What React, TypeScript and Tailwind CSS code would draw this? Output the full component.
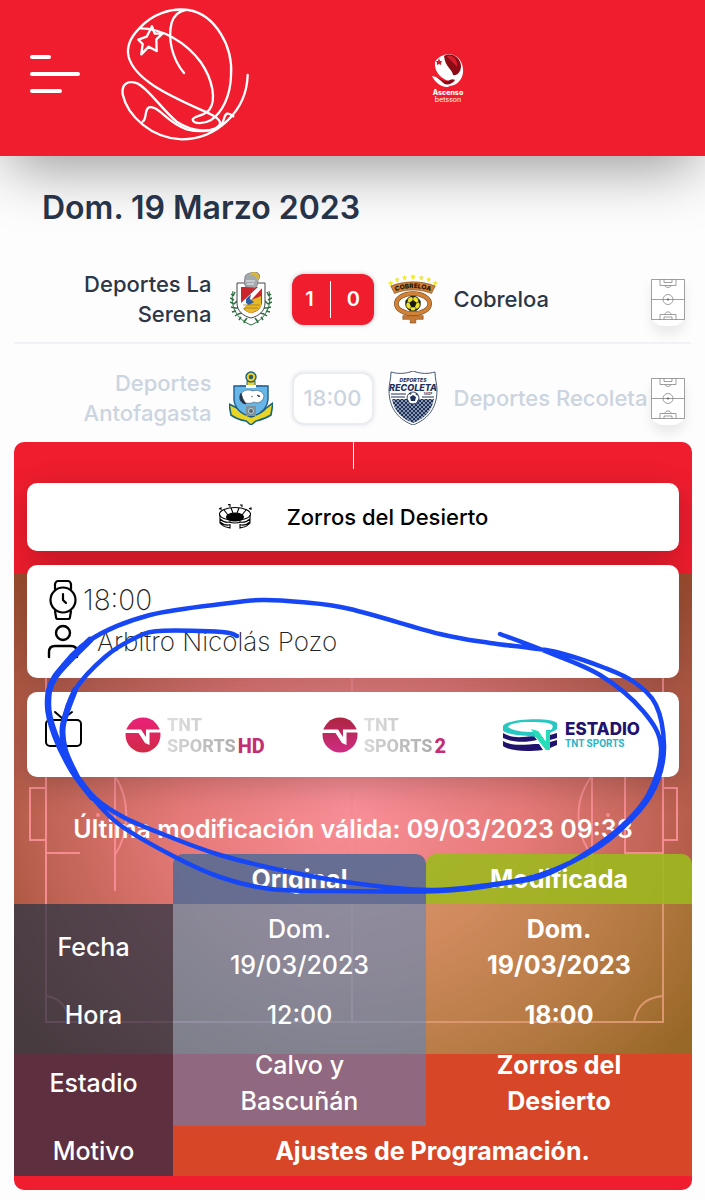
import type { ReactNode } from "react";

type Match = {
  home: string;
  away: string;
  homeCrest: ReactNode;
  awayCrest: ReactNode;
  score?: [number, number];
  time?: string;
};

const FederationLogo = () => (
  <svg
    viewBox="360 18 393 402"
    className="h-[134px] w-[131px]"
    fill="none"
    stroke="#fff"
    strokeWidth="7"
    strokeLinecap="round"
    strokeLinejoin="round"
  >
    <path d="M418 82C455 40 510 20 565 27C645 40 700 135 693 225C691 285 667 335 632 358C612 369 580 370 578 356C582 344 612 346 628 326C650 298 638 235 602 183C560 125 485 80 418 82C395 105 378 135 386 168C405 235 500 280 600 325C645 344 668 358 658 373C640 395 580 395 530 362C485 325 445 262 412 247C382 236 364 250 368 280C382 345 455 412 545 415C650 415 740 330 743 222" />
    <path d="M552 216C518 175 502 115 515 65C521 46 535 31 556 27" />
    <path d="M428 362C442 352 432 326 447 319C475 312 500 365 560 385C600 395 640 392 662 372C673 366 670 343 681 338C690 336 695 344 700 346" />
    <path d="M456 76L464 98L488 97L469 115L470 150L446 137L424 160L428 129L415 116L440 107Z" />
  </svg>
);

const AscensoLogo = () => (
  <svg viewBox="0 0 32 34" className="h-[34px] w-8">
    <path d="M3 9C8 0 22-2 28 7C34 17 31 28 22 32C14 35 6 31 5 26C9 30 14 31 20 29C13 27 2 22 3 9Z" fill="#fff" />
    <path d="M12 3C21-2 29 6 29 13C29 19 25 23 21 22C21 17 13 14 12 3Z" fill="#8b0c16" />
    <path d="M15 3C22 1 26 8 25 14C22 9 18 8 15 3Z" fill="#d91b2b" />
    <path d="M2 25C6 23 9 28 14 28C18 28 20 25 23 27C20 32 13 33 9 29L5 29Z" fill="#8b0c16" />
    <path d="M0 23C3 30 10 35 18 34C12 32 8 26 4 24Z" fill="#fff" />
    <path d="M7 5L8 8L10 8L9 10L9 12L7 11L5 12L5 10L4 8L6 8Z" fill="#d81828" />
  </svg>
);

const LaSerenaCrest = () => (
  <svg viewBox="0 0 42 54" className="h-[54px] w-[42px]">
    <g fill="none" stroke="#2c6e3f" strokeWidth="1">
      <path d="M3 19C0 34 6 47 21 53C36 47 42 34 39 19" />
      <path
        d="M1 22L4 24M0 26L4 28M0 30L4 32M1 35L5 36M2 40L6 39M5 44L8 42M9 48L11 45M14 51L15 48M5 20L3 24M7 29L4 32M9 36L5 36M12 41L8 42M17 46L14 50M41 22L38 24M42 26L38 28M42 30L38 32M41 35L37 36M40 40L36 39M37 44L34 42M33 48L31 45M28 51L27 48M37 20L39 24M35 29L38 32M33 36L37 36M30 41L34 42M25 46L28 50"
        strokeWidth="1.5"
      />
    </g>
    <path d="M7 11H35V31C35 39 29 44 21 46C13 44 7 39 7 31Z" fill="#fff" stroke="#333" strokeWidth="0.9" />
    <path d="M11 15H32V29C32 37 27 40 21 41C15 40 11 36 11 29Z" fill="#c9252b" />
    <path d="M12 32L31 24V34C29 38 25 40 21 41C16 40 13 37 12 32Z" fill="#e7b928" />
    <path d="M10 32L29 14H34L12 38Z" fill="#fff" />
    <path d="M16 27L21 22L20 27L24 30L19 33L16 31Z" fill="#2c5ea9" />
    <path d="M14 36H28M13 33H30" stroke="#9a6d1c" strokeWidth="0.7" />
    <path d="M15 6C14 2 20 1 24 0C30 0 31 5 28 8C28 11 28 14 25 16L16 15C14 12 14 9 15 6Z" fill="#a3a9ac" stroke="#646b70" strokeWidth="0.7" />
    <path d="M19 2C23-1 30 0 29 6L27 10C28 5 24 3 19 2Z" fill="#d9b634" />
    <path d="M16 9H25M17 12H24" stroke="#eee" />
  </svg>
);

const CobreloaCrest = () => (
  <svg viewBox="0 0 54 54" className="h-[54px] w-[54px]">
    {[
      [3, 10], [10, 6], [18, 4], [27, 3], [36, 4], [44, 6], [51, 10],
    ].map(([x, y]) => (
      <path
        key={x}
        transform={`translate(${x} ${y})`}
        d="M0-3L1-1L3-1L1 1L2 3L0 2L-2 3L-1 1L-3-1L-1-1Z"
        fill="#f2ea22"
      />
    ))}
    <path d="M24 39H30V45H38V49H30V53H24V49H16V45H24Z" fill="#c77a35" stroke="#704217" strokeWidth="0.6" />
    <ellipse cx="27" cy="32" rx="18" ry="11" fill="#fff" stroke="#704217" strokeWidth="5" />
    <ellipse cx="27" cy="32" rx="18" ry="11" fill="none" stroke="#d28236" strokeWidth="3.8" />
    <path d="M3 13C18 7 36 7 51 13L47 21C34 16 20 16 7 21Z" fill="#d28236" stroke="#704217" strokeWidth="0.6" />
    <path id="cobreloaArc" d="M7 19C20 14 34 14 47 19" fill="none" />
    <text fontSize="7" fontWeight="800" fill="#211508">
      <textPath href="#cobreloaArc" startOffset="50%" textAnchor="middle">COBRELOA</textPath>
    </text>
    <circle cx="27" cy="32" r="8" fill="#ece32a" stroke="#1a1a12" />
    <path d="M27 28L31 31L29 36H25L23 31ZM24 24H30L27 26ZM19 29L22 27L20 33ZM35 29L32 27L34 33ZM21 37L25 38L24 40ZM33 37L29 38L30 40Z" fill="#1a1a12" />
    <path d="M27 26V28M31 31L34 30M29 36L31 38M25 36L23 38M23 31L20 30" stroke="#1a1a12" strokeWidth="0.7" />
  </svg>
);

const AntofagastaCrest = () => (
  <svg viewBox="0 0 44 54" className="h-[54px] w-11">
    <path d="M18 10H26V15H33V19H11V15H18Z" fill="#f1cc2b" stroke="#17657b" />
    <circle cx="22" cy="6" r="5" fill="#f1cc2b" stroke="#17657b" strokeWidth="1.4" />
    <circle cx="22" cy="6" r="2.2" fill="#2a5f63" />
    <path d="M0 33L8 37C12 42 17 44 22 44C28 44 34 41 37 37L44 32L42 44C36 48 31 49 27 50L22 54L17 50C11 49 6 47 2 44Z" fill="#e8d527" stroke="#17657b" strokeWidth="1.6" />
    <path d="M5 15H39V29C38 38 32 43 22 46C12 43 6 38 5 29Z" fill="#68b5e8" stroke="#1d5b8c" strokeWidth="1.4" />
    <path d="M17 14H27V17H17Z" fill="#fff" />
    <path d="M11 25C13 19 19 18 24 20C29 18 34 21 35 25C34 31 29 33 25 31C22 33 14 33 11 29Z" fill="#fff" stroke="#33536b" strokeWidth="0.6" />
    <path d="M12 22C9 27 12 33 17 33L14 28ZM28 24L31 25L30 26ZM22 26L24 25" fill="#24354a" stroke="#24354a" strokeWidth="0.6" />
    <rect x="17" y="35" width="10" height="10" fill="#7e929b" />
    <circle cx="22" cy="40" r="2.5" fill="#536872" stroke="#dce5e8" strokeWidth="0.8" />
  </svg>
);

const RecoletaCrest = () => (
  <svg viewBox="0 0 50 54" className="h-[54px] w-[50px]">
    <defs>
      <pattern id="weave" width="4" height="4" patternUnits="userSpaceOnUse">
        <rect width="4" height="4" fill="#1e315b" />
        <path d="M0 0L2 2L4 0M0 4L2 2L4 4" stroke="#b5c1d3" strokeWidth="0.7" fill="none" />
      </pattern>
    </defs>
    <path d="M3 1C10 3 17 3 25 0C33 3 40 3 47 1C47 8 49 13 49 19C49 39 38 49 25 54C12 49 1 39 1 19C1 13 3 8 3 1Z" fill="#fff" stroke="#344767" strokeWidth="0.9" />
    <path d="M4 28H46C44 40 36 48 25 52C14 48 6 40 4 28Z" fill="url(#weave)" />
    <text x="25" y="11" textAnchor="middle" fontSize="5" fontStyle="italic" fontWeight="800" fill="#1e315b">DEPORTES</text>
    <text x="25" y="20" textAnchor="middle" fontSize="9" fontStyle="italic" fontWeight="800" fill="#1e315b">RECOLETA</text>
    <path d="M3 23H18M3 26H17M34 26H46" stroke="#1e315b" strokeWidth="1.2" />
    <text x="40" y="24" textAnchor="middle" fontSize="3" fontWeight="700" fill="#1e315b">SADP</text>
    <circle cx="25" cy="27" r="6" fill="#fff" stroke="#1e315b" strokeWidth="0.9" />
    <path d="M25 24L28 26L27 30H23L22 26ZM21 22L24 22L22 24ZM29 22L30 25L27 23ZM19 28L21 30L20 31ZM31 28L29 30L30 31Z" fill="#1e315b" />
  </svg>
);

const PitchIcon = () => (
  <svg viewBox="0 0 34 41" className="h-[41px] w-[34px]" fill="none" stroke="#777" strokeWidth="0.7">
    <path d="M0.5 0.5H33.5V40.5H0.5ZM0.5 20.5H33.5" />
    <circle cx="17" cy="20.5" r="5" />
    <circle cx="17" cy="20.5" r="0.8" fill="#333" />
    <path d="M9 0.5V6.5H25V0.5M13 0.5V3.5H21V0.5M14 6.5C14 9 20 9 20 6.5M9 40.5V35.5H25V40.5M13 40.5V38H21V40.5M14 35.5C14 32 20 32 20 35.5" />
  </svg>
);

const StadiumIcon = () => (
  <svg viewBox="0 0 34 26" className="h-[26px] w-[34px]" fill="none" stroke="#000" strokeWidth="1.1">
    <ellipse cx="17" cy="10" rx="15.5" ry="6.5" />
    <ellipse cx="17" cy="13" rx="8.5" ry="4" fill="#000" />
    <path d="M6 6L10 11M13 4L15 9M21 4L19 9M28 6L24 11M2 11V19C5 23 8 23 12 24V20M32 11V19C29 23 26 23 22 24V20M2 15C7 20 11 18 13 18M32 15C27 20 23 18 21 18M2 18C6 22 9 21 12 21M32 18C28 22 25 21 22 21M11 18Q17 20 23 18" />
    <path d="M1 5L3 4V6M10 1L12 0V3M22 1L24 1V3M31 5L33 4V6" />
  </svg>
);

const WatchIcon = () => (
  <svg viewBox="0 0 28 42" className="h-[42px] w-7" fill="none" stroke="#000" strokeWidth="2.2" strokeLinecap="round">
    <circle cx="14" cy="21" r="12.5" />
    <path d="M6 10L6 5Q7 2 9 2H19Q21 2 22 5L22 10M6 32L7 38Q7 40 9 40H19Q21 40 21 38L22 32M14 15V21L17 24" />
  </svg>
);

const RefereeIcon = () => (
  <svg viewBox="0 0 32 36" className="h-9 w-8" fill="none" stroke="#000" strokeWidth="2.4" strokeLinecap="round">
    <circle cx="16" cy="9" r="7" />
    <path d="M2 33V28Q2 22 8 22H24Q30 22 30 28V33" />
  </svg>
);

const TvIcon = () => (
  <svg viewBox="0 0 38 38" className="h-[38px] w-[38px] shrink-0" fill="none" stroke="#000" strokeWidth="2" strokeLinecap="round">
    <rect x="1" y="10" width="35" height="26" rx="4" />
    <path d="M10 2L18 9L27 2" />
  </svg>
);

const TntSports = ({ suffix, badge }: { suffix: string; badge: ReactNode }) => (
  <div className="flex items-center gap-1.5">
    {badge}
    <div className="font-['Roboto'] text-[18px] leading-[22px] font-extrabold">
      <div className="bg-linear-to-r from-[#dedede] to-[#b8b8b8] bg-clip-text text-transparent">TNT</div>
      <div className="flex gap-0.5 leading-5">
        <span className="bg-linear-to-r from-[#d8d8d8] to-[#adadad] bg-clip-text text-transparent">SPORTS</span>
        <span className="text-[20px] text-[#c42e72]">{suffix}</span>
      </div>
    </div>
  </div>
);

const TntBadge = ({ id, from, to }: { id: string; from: string; to: string }) => (
  <svg viewBox="0 0 36 36" className="h-9 w-9">
    <defs>
      <linearGradient id={id} x1="0" y1="0" x2="0" y2="1">
        <stop offset="0" stopColor={from} />
        <stop offset="1" stopColor={to} />
      </linearGradient>
    </defs>
    <circle cx="18" cy="18" r="17.5" fill={`url(#${id})`} />
    <path d="M0 12.5H16L21 20V12.5H36V15.5H24.5V28L20 26L13.5 16H0Z" fill="#fff" />
  </svg>
);

const EstadioLogo = () => (
  <div className="flex items-center gap-2">
    <svg viewBox="0 0 54 32" className="h-8 w-[54px]" fill="none">
      <path d="M0 14C9 20 20 18 31 17L34 21C22 24 8 23 0 19ZM0 22C10 28 23 25 36 25L40 31C22 33 7 32 0 27ZM47 16L54 14V19L47 21ZM47 23L54 21V26L47 29Z" fill="#21126e" />
      <path d="M0 7C4-1 50-2 54 4V10C50 13 48 13 47 14V31H43L33 18C24 16 8 17 0 12ZM5 8C12 13 24 13 35 13L43 23V11H48C54 4 44 3 27 3C14 3 6 5 5 8Z" fill="#27c8c2" fillRule="evenodd" />
      <path d="M28 10C33 12 35 11 36 13L43 23V12L47 12V31H43L33 18Z" fill="#26ddb8" />
    </svg>
    <div className="font-['Inter']">
      <div className="text-[17px] leading-[17px] font-extrabold text-[#21126e]">ESTADIO</div>
      <div className="font-['Roboto'] text-[10px] leading-[11px] font-bold text-[#29b5c5]">TNT SPORTS</div>
    </div>
  </div>
);

/* Pitch photo that sits behind the match detail */
const PitchBackground = () => (
  <div className="absolute inset-x-0 top-[132px] h-[480px] bg-[radial-gradient(ellipse_62%_80%_at_50%_48%,#f98f98_0%,#e67a79_40%,#bf6354_74%,#984b2d_100%)]">
    <svg viewBox="0 0 678 480" preserveAspectRatio="none" className="h-full w-full" fill="none" stroke="#f58c91" strokeWidth="2">
      <path d="M32 32H649V448H32ZM338 32V448M32 279H66M101 180V317M32 214H16V266H32M578 180V317M611 180V279H649M649 214H663V266H649" />
      <path d="M101 202C116 225 116 258 101 281M578 202C560 225 560 258 578 281" />
      <path d="M32 422Q48 424 54 440M649 422Q624 424 620 448" />
      <circle cx="338" cy="240" r="45" strokeOpacity="0.5" />
      <circle cx="84" cy="241" r="1" />
      <circle cx="594" cy="241" r="1" />
    </svg>
  </div>
);

const SCRIBBLE_POINTS = [
  [237, 636], [222, 632], [160, 631], [135, 638], [105, 657], [75, 690],
  [63, 725], [65, 750], [76, 775], [96, 799], [125, 818], [165, 835],
  [220, 855], [290, 872], [360, 884], [430, 890], [480, 886], [540, 875],
  [600, 846], [640, 810], [658, 780], [664, 745], [656, 705], [634, 682],
  [605, 668], [560, 653], [530, 648], [490, 643], [440, 634], [350, 609],
  [300, 602], [262, 600], [230, 603], [150, 615], [90, 640], [55, 677],
  [48, 705], [55, 735], [72, 770], [92, 797], [120, 825], [175, 857],
  [220, 877], [270, 889], [330, 891], [440, 891], [500, 884], [550, 873],
  [610, 836], [648, 795], [661, 747], [643, 711], [600, 675], [545, 651],
  [500, 634],
];

const toSmoothPath = (points: number[][]) =>
  points.slice(1).reduce((path, [x, y], i) => {
    const [px, py] = points[Math.max(i - 1, 0)];
    const [ax, ay] = points[i];
    const [nx, ny] = points[Math.min(i + 2, points.length - 1)];
    const c1 = `${ax + (x - px) / 6} ${ay + (y - py) / 6}`;
    const c2 = `${x - (nx - ax) / 6} ${y - (ny - ay) / 6}`;
    return `${path}C${c1} ${c2} ${x} ${y}`;
  }, `M${points[0][0]} ${points[0][1]}`);

const Scribble = () => (
  <svg
    viewBox="0 0 705 1200"
    className="pointer-events-none absolute inset-x-0 top-0 w-full"
    fill="none"
    stroke="#1747f5"
    strokeWidth="4.5"
    strokeLinecap="round"
    strokeLinejoin="round"
  >
    <path d={toSmoothPath(SCRIBBLE_POINTS)} />
    <path d={toSmoothPath(SCRIBBLE_POINTS.slice(34, 40))} strokeWidth="6.5" />
    <path d={toSmoothPath(SCRIBBLE_POINTS.slice(5, 9))} strokeWidth="6" />
  </svg>
);

const MATCHES: Match[] = [
  {
    home: "Deportes La Serena",
    away: "Cobreloa",
    homeCrest: <LaSerenaCrest />,
    awayCrest: <CobreloaCrest />,
    score: [1, 0],
  },
  {
    home: "Deportes Antofagasta",
    away: "Deportes Recoleta",
    homeCrest: <AntofagastaCrest />,
    awayCrest: <RecoletaCrest />,
    time: "18:00",
  },
];

const CHANGES = [
  { label: "Fecha", original: "Dom. 19/03/2023", modified: "Dom. 19/03/2023" },
  { label: "Hora", original: "12:00", modified: "18:00" },
  { label: "Estadio", original: "Calvo y Bascuñán", modified: "Zorros del Desierto" },
];

const MatchRow = ({ match }: { match: Match }) => (
  <div
    className={`mx-3.5 flex h-22 items-center pr-1.5 text-[22px] leading-[30px] font-medium ${
      match.score ? "border-b-2 border-[#f1f2f5] text-[#2c3647]" : "text-[#cbd4df]"
    }`}
  >
    <div className="grid flex-1 grid-cols-[1fr_auto_1fr] items-center gap-4">
      <p className="max-w-[150px] justify-self-end text-right">{match.home}</p>
      <div className="grid grid-cols-[50px_82px_50px] items-center gap-3.5">
        <div className="flex justify-center pr-1">{match.homeCrest}</div>
        {match.score ? (
          <div className="flex h-[51px] items-center justify-center gap-4 rounded-xl bg-[#ef1d2e] text-[20px] font-semibold text-white shadow-[0_0_4px_rgba(0,0,0,0.25)]">
            <span>{match.score[0]}</span>
            <span className="h-[37px] w-px bg-white" />
            <span>{match.score[1]}</span>
          </div>
        ) : (
          <div className="flex h-[53px] items-center justify-center rounded-xl border-2 border-[#e9ecf1] bg-white shadow-[0_0_4px_rgba(0,0,0,0.1)]">
            {match.time}
          </div>
        )}
        <div className="flex justify-center">{match.awayCrest}</div>
      </div>
      <p className="w-0 whitespace-nowrap">{match.away}</p>
    </div>
    <button
      type="button"
      aria-label="Ver formación"
      className="shrink-0 rounded-xl bg-white pt-1.5 pb-1.5 shadow-[0_8px_12px_rgba(0,0,0,0.08)]"
    >
      <PitchIcon />
    </button>
  </div>
);

const MatchDetail = () => (
  <section className="relative mr-[13px] ml-3.5 overflow-hidden rounded-[10px] bg-[#ef1d2e] pb-3.5">
    <PitchBackground />
    <div className="relative">
      <div className="mx-auto h-[27px] w-px bg-white" />
      <div className="flex flex-col gap-3.5 px-[13px] pt-3.5">
        <div className="flex h-[68px] items-center justify-center gap-[35px] rounded-[10px] bg-white text-[22px] font-medium text-black shadow-[0_8px_32px_rgba(0,0,0,0.2)]">
          <StadiumIcon />
          <p>Zorros del Desierto</p>
        </div>
        <div className="h-[113px] rounded-[10px] bg-white px-5 pt-3.5 font-extralight text-[#222] shadow-[0_8px_32px_rgba(0,0,0,0.2)]">
          <div className="flex items-center gap-1.5 pl-0.5 text-[28px] leading-[42px]">
            <WatchIcon />
            <p>18:00</p>
          </div>
          <div className="flex items-center gap-[18px] text-[26px] leading-[42px]">
            <RefereeIcon />
            <p>Arbitro Nicolás Pozo</p>
          </div>
        </div>
        <div className="flex h-[85px] items-center gap-[42px] rounded-[10px] bg-white pr-[39px] pl-[18px] shadow-[0_8px_32px_rgba(0,0,0,0.2)]">
          <div className="pb-3">
            <TvIcon />
          </div>
          <div className="flex flex-1 items-center justify-between">
            <TntSports suffix="HD" badge={<TntBadge id="tntHd" from="#ea2079" to="#cf2b45" />} />
            <TntSports suffix="2" badge={<TntBadge id="tnt2" from="#ad2540" to="#cf2d83" />} />
            <EstadioLogo />
          </div>
        </div>
      </div>
      <p className="mt-[34px] mb-[7px] text-center text-[25px] leading-9 font-semibold whitespace-nowrap text-white">
        Última modificación válida: 09/03/2023 09:38
      </p>
      <table className="w-full table-fixed border-collapse text-center text-[25px] leading-9 font-medium text-white">
        <colgroup>
          <col className="w-[159px]" />
          <col className="w-[253px]" />
          <col />
        </colgroup>
        <thead>
          <tr>
            <td />
            <th className="rounded-t-[10px] bg-[#586c94]/90 py-[7px] font-bold">Original</th>
            <th className="rounded-t-[10px] bg-[#9cb91e]/90 py-[7px] font-bold">Modificada</th>
          </tr>
        </thead>
        <tbody>
          {CHANGES.map((row) => (
            <tr key={row.label}>
              <th className="bg-[#2c3646]/75 py-[7px] font-medium">{row.label}</th>
              <td className="bg-[#5c90aa]/65 px-12 py-[7px]">{row.original}</td>
              <td className="bg-[#96b515]/28 px-14 py-[7px] font-bold">{row.modified}</td>
            </tr>
          ))}
          <tr>
            <th className="bg-[#2c3646]/75 py-[7px] font-medium">Motivo</th>
            <td colSpan={2} className="bg-[#96b515]/28 py-[7px] font-bold">
              Ajustes de Programación.
            </td>
          </tr>
        </tbody>
      </table>
    </div>
  </section>
);

const App = () => (
  <div className="relative min-h-screen overflow-hidden bg-[#fdfdfd] pb-2.5 font-['Inter',sans-serif]">
    <header className="relative flex h-[156px] items-center bg-[#ef1d2e] pl-[30px] shadow-[0_20px_60px_-8px_rgba(0,0,0,0.4)]">
      <button type="button" aria-label="Menú" className="mb-2 flex w-[50px] flex-col gap-[13px]">
        <span className="h-1 w-[21px] rounded-full bg-white" />
        <span className="h-1 w-[50px] rounded-full bg-white" />
        <span className="h-1 w-8 rounded-full bg-white" />
      </button>
      <a href="#" aria-label="Inicio" className="mb-2 ml-10">
        <FederationLogo />
      </a>
      <a href="#" className="mx-auto flex flex-col items-center pr-[60px] text-white">
        <AscensoLogo />
        <span className="mt-0.5 text-[7px] leading-[7px] font-extrabold">Ascenso</span>
        <span className="text-[7px] leading-[7px]">betsson</span>
      </a>
    </header>
    <main className="relative">
      <h1 className="mb-7 px-[42px] pt-8 text-[32px] leading-10 font-semibold text-[#263348]">Dom. 19 Marzo 2023</h1>
      <div className="flex flex-col gap-2.5">
        {MATCHES.map((match) => (
          <MatchRow key={match.home} match={match} />
        ))}
      </div>
      <MatchDetail />
    </main>
    <Scribble />
  </div>
);

export default App;
